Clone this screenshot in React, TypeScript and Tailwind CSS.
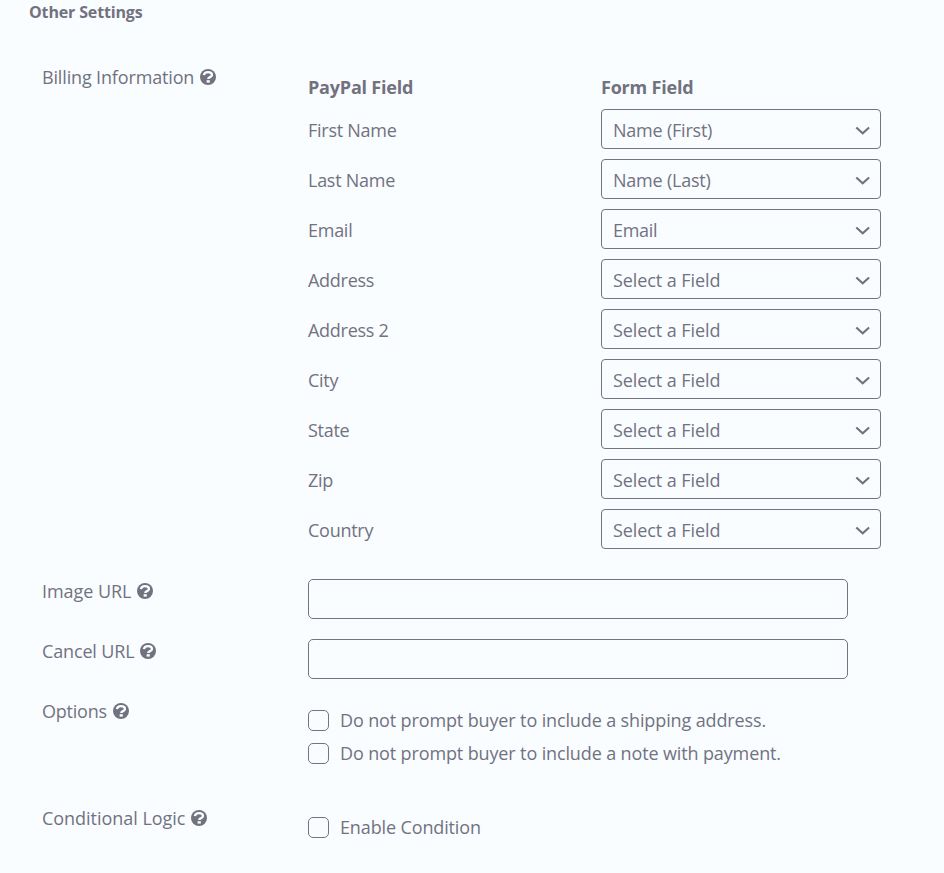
const billing = [
  { label: "First Name", value: "Name (First)", tracking: "tracking-[-0.22px]" },
  { label: "Last Name", value: "Name (Last)", tracking: "tracking-[-0.22px]" },
  { label: "Email", value: "Email", tracking: "tracking-[-0.3px]" },
  { label: "Address", value: "Select a Field", tracking: "tracking-[-0.08px]" },
  { label: "Address 2", value: "Select a Field", tracking: "tracking-[-0.08px]" },
  { label: "City", value: "Select a Field", tracking: "tracking-[-0.08px]" },
  { label: "State", value: "Select a Field", tracking: "tracking-[-0.08px]" },
  { label: "Zip", value: "Select a Field", tracking: "tracking-[-0.08px]" },
  { label: "Country", value: "Select a Field", tracking: "tracking-[-0.08px]" },
];

function HelpIcon() {
  return (
    <svg viewBox="0 0 16 16" className="size-4 shrink-0" fill="none">
      <circle cx="8" cy="8" r="8" fill="currentColor" />
      <path d="M3.900 6.200C4.200 4.200 5.800 3.200 8 3.200c2.500 0 4 1.100 4 2.800 0 2.300-3.800 1.900-3.800 4" stroke="#f9fdff" strokeWidth="2.300" />
      <path d="M6.600 11.200h3.200v2.400H6.600z" fill="#f9fdff" />
    </svg>
  );
}

function Label({ text, className }: { text: string; className: string }) {
  return (
    <div className="flex h-6 w-[266px] shrink-0 items-center gap-[6px]">
      <span className={className}>{text}</span>
      <HelpIcon />
    </div>
  );
}

function Select({ value, className }: { value: string; className: string }) {
  return (
    <div className="flex h-10 w-[280px] items-center justify-between rounded-[4px] border border-[#74747f] pr-[9px] pl-[11px]">
      <span className={`pt-px ${className}`}>{value}</span>
      <svg viewBox="0 0 16 16" className="mt-1 size-4" fill="none" stroke="currentColor" strokeWidth="2.100">
        <path d="M1.300 4.500 7.700 10.300l6.400-5.800" />
      </svg>
    </div>
  );
}

function Check({ text }: { text: string }) {
  return (
    <label className="flex h-[33px] items-center gap-[11px]">
      <span className="size-[21px] rounded-[5px] border border-[#74747f]" />
      <span className="pb-0.5 tracking-[-0.13px]">{text}</span>
    </label>
  );
}

export default function App() {
  return (
    <main className="h-[873px] w-[944px] overflow-hidden bg-[#f9fdff] font-['Open_Sans','Noto_Sans',sans-serif] text-[18px] leading-6 tracking-[-0.27px] text-[#72727f]">
      <h2 className="ml-[29px] h-[65px] text-[16px] font-bold tracking-[-0.15px]">Other Settings</h2>
      <section className="ml-[42px] flex h-[514px]">
        <Label text="Billing Information" className="tracking-[-0.15px]" />
        <div className="pt-[10px]">
          <div className="flex h-[34px] font-bold tracking-[-0.2px]">
            <span className="w-[293px]">PayPal Field</span>
            <span>Form Field</span>
          </div>
          {billing.map((row) => (
            <div key={row.label} className="flex h-[50px]">
              <span className="w-[293px] pt-[9px]">{row.label}</span>
              <Select value={row.value} className={row.tracking} />
            </div>
          ))}
        </div>
      </section>
      <section className="ml-[42px] flex h-[60px]">
        <Label text="Image URL" className="tracking-[-0.05px]" />
        <input className="h-10 w-[540px] rounded-[5px] border border-[#74747f]" />
      </section>
      <section className="ml-[42px] flex h-[60px]">
        <Label text="Cancel URL" className="tracking-[-0.15px]" />
        <input className="h-10 w-[540px] rounded-[5px] border border-[#74747f]" />
      </section>
      <section className="ml-[42px] flex h-[107px]">
        <Label text="Options" className="tracking-[-0.22px]" />
        <div className="pt-[5px]">
          <Check text="Do not prompt buyer to include a shipping address." />
          <Check text="Do not prompt buyer to include a note with payment." />
        </div>
      </section>
      <section className="ml-[42px] flex">
        <Label text="Conditional Logic" className="tracking-[-0.03px]" />
        <div className="pt-[5px]">
          <Check text="Enable Condition" />
        </div>
      </section>
    </main>
  );
}
